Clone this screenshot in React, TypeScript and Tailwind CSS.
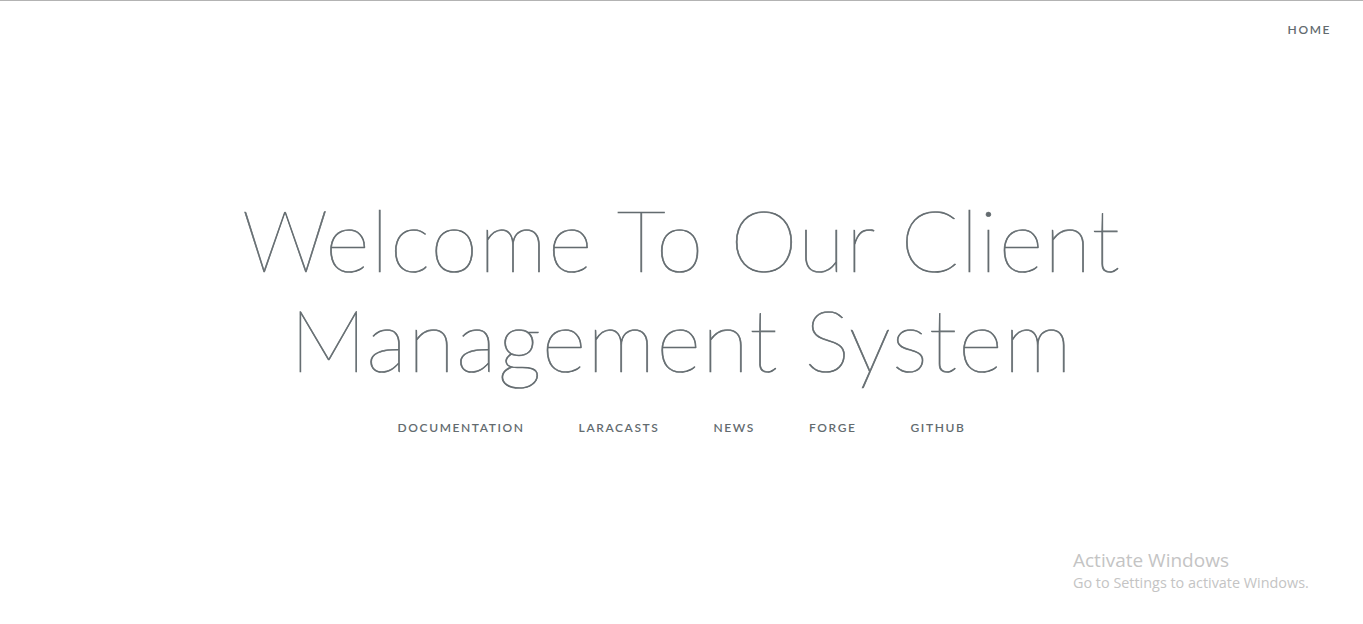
const links = ['Documentation', 'Laracasts', 'News', 'Forge', 'GitHub'];

export default function App() {
  return (
    <div className="relative h-screen bg-white border-t border-[#b3b3b3] text-[#636b6f] font-['Lato',sans-serif]">
      {/* top right links */}
      <div className="absolute right-[7px] top-[15px]">
        <a href="#" className="px-[25px] text-[12px] font-semibold tracking-[0.1rem] uppercase text-[#636b6f]">
          Home
        </a>
      </div>

      <div className="flex h-full items-center justify-center">
        <div className="text-center">
          <div className="mb-[30px] text-[86px] leading-[100px] font-thin tracking-[1.2px] [-webkit-text-stroke:0.7px_#636b6f]">
            Welcome To Our Client
            <br />
            Management System
          </div>
          <div className="flex justify-center">
            {links.map((link) => (
              <a
                key={link}
                href="#"
                className="px-[27px] text-[12px] font-semibold tracking-[0.1rem] uppercase text-[#636b6f]"
              >
                {link}
              </a>
            ))}
          </div>
        </div>
      </div>

      {/* windows watermark */}
      <div className="absolute left-[1073px] top-[548px] text-[#c4c4c4] font-['Open_Sans',sans-serif] leading-tight">
        <div className="text-[19px]">Activate Windows</div>
        <div className="mt-[1px] text-[14.4px]">Go to Settings to activate Windows.</div>
      </div>
    </div>
  );
}
